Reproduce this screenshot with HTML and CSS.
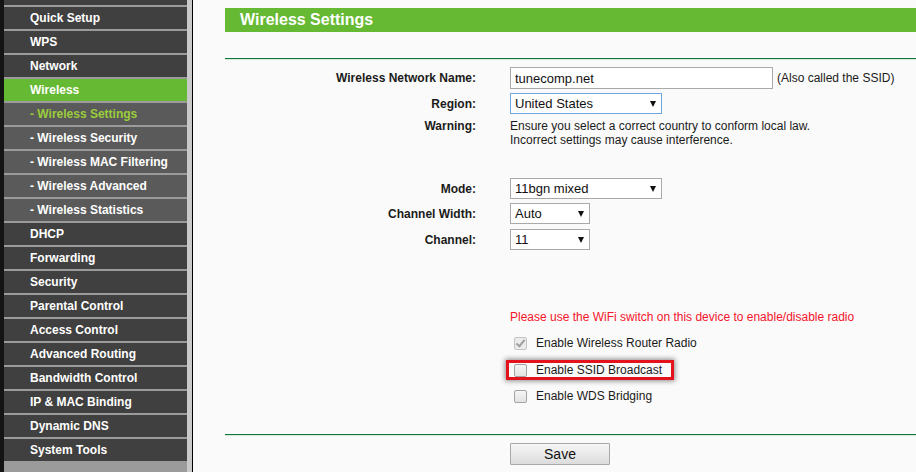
FILE: index.html
```html
<!DOCTYPE html>
<html lang="en">
<head>
  <meta charset="UTF-8" />
  <title>Wireless Settings</title>
  <link rel="stylesheet" href="styles.css">
</head>
<body>

  <!-- Side menu -->
  <div id="sidebar">
    <div class="menu-top"></div>
    <ul id="menu">
      <li>Quick Setup</li>
      <li>WPS</li>
      <li>Network</li>
      <li class="active">Wireless</li>
      <li class="sub current">- Wireless Settings</li>
      <li class="sub">- Wireless Security</li>
      <li class="sub">- Wireless MAC Filtering</li>
      <li class="sub">- Wireless Advanced</li>
      <li class="sub">- Wireless Statistics</li>
      <li>DHCP</li>
      <li>Forwarding</li>
      <li>Security</li>
      <li>Parental Control</li>
      <li>Access Control</li>
      <li>Advanced Routing</li>
      <li>Bandwidth Control</li>
      <li>IP &amp; MAC Binding</li>
      <li>Dynamic DNS</li>
      <li>System Tools</li>
    </ul>
  </div>

  <!-- Settings page -->
  <div id="main">
    <h1 class="title-bar">Wireless Settings</h1>
    <hr class="rule">

    <div class="row row-name">
      <label>Wireless Network Name:</label>
      <div class="field">
        <input type="text" class="text-input" value="tunecomp.net">
        <span class="hint">(Also called the SSID)</span>
      </div>
    </div>

    <div class="row row-region">
      <label>Region:</label>
      <div class="field">
        <div class="select wide">
          <select class="focused"><option>United States</option></select>
        </div>
      </div>
    </div>

    <div class="row row-warning">
      <label>Warning:</label>
      <div class="note">
        Ensure you select a correct country to conform local law.<br>
        Incorrect settings may cause interference.
      </div>
    </div>

    <div class="row row-mode">
      <label>Mode:</label>
      <div class="field">
        <div class="select wide">
          <select><option>11bgn mixed</option></select>
        </div>
      </div>
    </div>

    <div class="row row-width">
      <label>Channel Width:</label>
      <div class="field">
        <div class="select narrow">
          <select><option>Auto</option></select>
        </div>
      </div>
    </div>

    <div class="row row-channel">
      <label>Channel:</label>
      <div class="field">
        <div class="select narrow">
          <select><option>11</option></select>
        </div>
      </div>
    </div>

    <div class="row row-notice">
      <span></span>
      <div class="notice">Please use the WiFi switch on this device to enable/disable radio</div>
    </div>

    <div class="row row-check1">
      <span></span>
      <div class="check"><input type="checkbox" checked disabled>Enable Wireless Router Radio</div>
    </div>

    <div class="row row-check2">
      <span></span>
      <div class="check marked"><input type="checkbox">Enable SSID Broadcast</div>
    </div>

    <div class="row row-check3">
      <span></span>
      <div class="check"><input type="checkbox">Enable WDS Bridging</div>
    </div>

    <hr class="rule rule-bottom">

    <div class="row row-save">
      <span></span>
      <div class="field"><button class="btn-save">Save</button></div>
    </div>
  </div>

</body>
</html>
```

FILE: styles.css
```css
body {
  margin: 0;
  display: flex;
  height: 472px;
  overflow: hidden;
  font-family: "Liberation Sans", Arial, sans-serif;
  font-size: 12px;
  color: #1a1a1a;
  background: #fafafa;
}

/* Side menu */
#sidebar {
  display: flex;
  flex-direction: column;
  flex-shrink: 0;
  width: 183px;
  padding-right: 5px;
  background: #c9c9c9;
  border-left: 4px solid #141414;
  border-right: 1px solid #000;
}

.menu-top {
  height: 5px;
  background: #404040;
}

#menu {
  list-style: none;
  margin: 0;
  padding: 0;
  flex: 1;
  background: #9b9b9b;
}

#menu li {
  height: 22px;
  line-height: 23px;
  padding-left: 26px;
  border-top: 2px solid #9b9b9b;
  background: #404040;
  color: #fff;
  font-weight: bold;
  white-space: nowrap;
}

#menu li.active {
  background: #66b933;
}

#menu li.sub {
  background: #5a5a5a;
}

#menu li.current {
  color: #9acd3a;
}

/* Main area */
#main {
  flex: 1;
  min-width: 0;
  padding: 8px 0 0 32px;
}

.title-bar {
  margin: 0;
  height: 24px;
  line-height: 24px;
  padding-left: 15px;
  background: #66b933;
  color: #fff;
  font-size: 16px;
}

.rule {
  height: 0;
  margin: 26px 0 0;
  border: 0;
  border-top: 1px solid #117a3b;
  box-shadow: 0 1px 0 #d3e7d9;
}

.rule-bottom {
  margin-top: 28px;
}

.row {
  display: grid;
  grid-template-columns: 251px 1fr;
  column-gap: 34px;
  align-items: center;
}

.row > label {
  text-align: right;
  font-weight: bold;
}

.field {
  display: flex;
  align-items: center;
}

.row-name { margin-top: 8px; height: 22px; }
.row-region { margin-top: 4px; height: 21px; }
.row-warning { margin-top: 5px; align-items: start; line-height: 14px; }
.row-mode { margin-top: 31px; height: 21px; }
.row-width { margin-top: 4px; height: 21px; }
.row-channel { margin-top: 5px; height: 21px; }
.row-notice { margin-top: 60px; line-height: 14px; }
.row-check1 { margin-top: 9px; }
.row-check2 { margin-top: 7px; }
.row-check3 { margin-top: 6px; }
.row-save { margin-top: 8px; }

.text-input {
  box-sizing: border-box;
  width: 263px;
  height: 22px;
  margin: 0;
  padding: 0 4px;
  border: 1px solid #a9a9a9;
  background: #fff;
  font-family: "Liberation Sans", Arial, sans-serif;
  font-size: 13px;
  color: #111;
}

.hint {
  margin-left: 4px;
}

.select {
  position: relative;
}

.select.wide { width: 152px; }
.select.narrow { width: 80px; }

.select::after {
  content: "";
  position: absolute;
  right: 6px;
  top: 8px;
  border-left: 3px solid transparent;
  border-right: 3px solid transparent;
  border-top: 6px solid #111;
  pointer-events: none;
}

select {
  appearance: none;
  display: block;
  box-sizing: border-box;
  width: 100%;
  height: 21px;
  margin: 0;
  padding: 0 4px;
  border: 1px solid #a9a9a9;
  border-radius: 0;
  background: #fff;
  font-family: "Liberation Sans", Arial, sans-serif;
  font-size: 13px;
  color: #111;
}

select.focused {
  border-color: #6fa6e2;
}

.notice {
  color: #f5142a;
}

.check {
  display: flex;
  align-items: center;
  height: 20px;
}

.check input {
  appearance: none;
  position: relative;
  flex-shrink: 0;
  box-sizing: border-box;
  width: 13px;
  height: 13px;
  margin: 0 9px 0 4px;
  border: 1px solid #a3a3a3;
  border-radius: 2px;
  background: linear-gradient(#f5f5f5, #e3e3e3);
}

.check input:checked::after {
  content: "";
  position: absolute;
  left: 3px;
  top: 0;
  width: 3px;
  height: 7px;
  border: solid #a0a0a0;
  border-width: 0 2px 2px 0;
  transform: rotate(40deg);
}

.check input:disabled {
  border-color: #c4c4c4;
  background: #ececec;
}

/* highlight around SSID broadcast */
.check.marked {
  position: relative;
}

.check.marked::after {
  content: "";
  position: absolute;
  left: -4px;
  top: 0;
  width: 168px;
  height: 20px;
  box-sizing: border-box;
  border: 3px solid #e3121c;
  box-shadow: 0 0 5px 1px rgba(0, 0, 0, 0.45);
  pointer-events: none;
}

.btn-save {
  width: 100px;
  height: 22px;
  padding: 0;
  border: 1px solid #a8a8a8;
  border-radius: 1px;
  background: linear-gradient(#f6f6f6, #dcdcdc);
  font-family: "Liberation Sans", Arial, sans-serif;
  font-size: 14px;
  color: #111;
}
```
